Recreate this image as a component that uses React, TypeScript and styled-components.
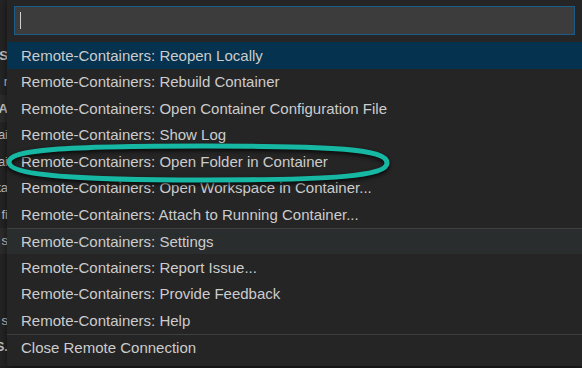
import React from "react";
import styled, { createGlobalStyle } from "styled-components";

const Global = createGlobalStyle`
  html, body { margin: 0; padding: 0; background: #1e1e1e; }
  body { width: 582px; height: 368px; overflow: hidden; font-family: "Liberation Sans", Arial, sans-serif; }
  #root { width: 582px; height: 368px; }
`;

const Page = styled.div`
  position: relative;
  display: flex;
  width: 582px;
  height: 368px;
  background: #1e1e1e;
`;

const Strip = styled.div`
  width: 7px;
  height: 366px;
  padding-top: 42px;
  box-sizing: border-box;
  background: #252526;
  display: flex;
  flex-direction: column;
  overflow: hidden;
`;

const StripRow = styled.div<{ $shade?: string }>`
  height: 26.5px;
  flex: none;
  display: flex;
  justify-content: flex-end;
  align-items: center;
  overflow: hidden;
  white-space: nowrap;
  background: ${(p) => p.$shade ?? "transparent"};
  color: #c8c8c8;
  font-size: 13px;
`;

const Frag = styled.span<{ $bold?: boolean }>`
  font-weight: ${(p) => (p.$bold ? 700 : 400)};
  margin-right: -1px;
`;

const Panel = styled.div`
  flex: 1;
  height: 366px;
  background: #252526;
  display: flex;
  flex-direction: column;
  padding-top: 6px;
  box-sizing: border-box;
  box-shadow: 0 0 8px rgba(0, 0, 0, 0.6);
`;

const InputBox = styled.div`
  margin: 0 7px 7px 7px;
  height: 29px;
  box-sizing: border-box;
  background: #3c3c3c;
  border: 1px solid #1a5d8a;
  display: flex;
  align-items: center;
  padding-left: 5px;
`;

const Caret = styled.div`
  width: 1px;
  height: 17px;
  background: #d0d0d0;
`;

const List = styled.div`
  display: flex;
  flex-direction: column;
`;

const Row = styled.div<{ $selected?: boolean; $hover?: boolean; $sep?: boolean }>`
  height: 26.5px;
  flex: none;
  box-sizing: border-box;
  display: flex;
  align-items: center;
  padding-left: 14px;
  font-size: 15px;
  color: #cccccc;
  white-space: nowrap;
  background: ${(p) => (p.$selected ? "#04324f" : p.$hover ? "#2a2d2e" : "transparent")};
  border-top: ${(p) => (p.$sep ? "1px solid #3e3e3f" : "none")};
`;

const Highlight = styled.svg`
  position: absolute;
  left: 0px;
  top: 138px;
  overflow: visible;
  pointer-events: none;
  filter: drop-shadow(0 2px 2px rgba(0, 0, 0, 0.8));
`;

const items: { label: string; selected?: boolean; hover?: boolean; sep?: boolean }[] = [
  { label: "Remote-Containers: Reopen Locally", selected: true },
  { label: "Remote-Containers: Rebuild Container" },
  { label: "Remote-Containers: Open Container Configuration File" },
  { label: "Remote-Containers: Show Log" },
  { label: "Remote-Containers: Open Folder in Container" },
  { label: "Remote-Containers: Open Workspace in Container..." },
  { label: "Remote-Containers: Attach to Running Container..." },
  { label: "Remote-Containers: Settings", hover: true, sep: true },
  { label: "Remote-Containers: Report Issue..." },
  { label: "Remote-Containers: Provide Feedback" },
  { label: "Remote-Containers: Help" },
  { label: "Close Remote Connection", sep: true },
];

const strip: { t: string; bold?: boolean; shade?: string }[] = [
  { t: "S", bold: true },
  { t: "r" },
  { t: "A", bold: true, shade: "#2d2d2e" },
  { t: "ai" },
  { t: "ai" },
  { t: "ta" },
  { t: "fi" },
  { t: "s", shade: "#2c2c2d" },
  { t: "" },
  { t: "" },
  { t: "s" },
  { t: "S.", bold: true },
];

export default function App() {
  return (
    <>
      <Global />
      <Page>
        <Strip>
          {strip.map((s, i) => (
            <StripRow key={i} $shade={s.shade}>
              <Frag $bold={s.bold}>{s.t}</Frag>
            </StripRow>
          ))}
        </Strip>
        <Panel>
          <InputBox>
            <Caret />
          </InputBox>
          <List>
            {items.map((it) => (
              <Row key={it.label} $selected={it.selected} $hover={it.hover} $sep={it.sep}>
                {it.label}
              </Row>
            ))}
          </List>
        </Panel>
        <Highlight width="392" height="50" viewBox="0 0 392 50">
          <path
            d="M 9 24 C 9 12, 62 8, 204 8 C 334 8, 387 11, 387 25 C 387 38, 334 42, 204 42 C 62 42, 9 36, 9 24 Z"
            fill="none"
            stroke="#17b8a3"
            strokeWidth="5"
          />
        </Highlight>
      </Page>
    </>
  );
}
